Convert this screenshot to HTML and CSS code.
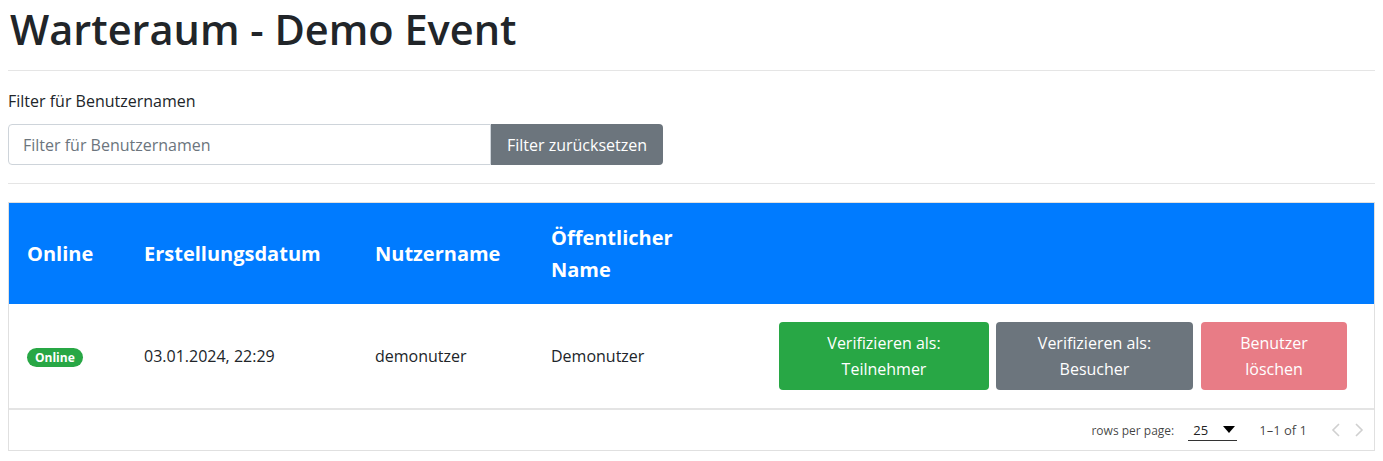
FILE: index.html
```html
<!DOCTYPE html>
<html lang="de">
<head>
<meta charset="utf-8">
<title>Warteraum - Demo Event</title>
<link rel="stylesheet" href="styles.css">
</head>
<body>
<h1 class="title">Warteraum - Demo Event</h1>
<hr class="sep sep-top">
<label class="filter-label" for="filter">Filter für Benutzernamen</label>
<div class="input-group">
  <input id="filter" class="filter-input" type="text" placeholder="Filter für Benutzernamen">
  <button class="btn btn-reset">Filter zurücksetzen</button>
</div>
<hr class="sep sep-mid">
<div class="table-card">
  <table class="data-table">
    <colgroup>
      <col class="c1"><col class="c2"><col class="c3"><col class="c4"><col class="c5">
    </colgroup>
    <thead>
      <tr>
        <th>Online</th>
        <th>Erstellungsdatum</th>
        <th>Nutzername</th>
        <th><div class="wrap">Öffentlicher Name</div></th>
        <th></th>
      </tr>
    </thead>
    <tbody>
      <tr>
        <td><span class="badge">Online</span></td>
        <td>03.01.2024, 22:29</td>
        <td>demonutzer</td>
        <td>Demonutzer</td>
        <td>
          <div class="actions">
            <button class="btn act btn-green">Verifizieren als:<br>Teilnehmer</button>
            <button class="btn act btn-grey">Verifizieren als:<br>Besucher</button>
            <button class="btn act btn-red" disabled>Benutzer<br>löschen</button>
          </div>
        </td>
      </tr>
    </tbody>
  </table>
  <div class="table-footer">
    <span class="rpp">rows per page:</span>
    <div class="select"><span>25</span><svg class="caret" width="12" height="7" viewBox="0 0 12 7"><path d="M0 0h12L6 7z" fill="#000"/></svg></div>
    <span class="range">1–1 of 1</span>
    <div class="pager">
      <svg width="10" height="14" viewBox="0 0 10 14"><path d="M8 1L2 7l6 6" fill="none" stroke="#d0d0d0" stroke-width="1.6"/></svg>
      <svg width="10" height="14" viewBox="0 0 10 14"><path d="M2 1l6 6-6 6" fill="none" stroke="#d0d0d0" stroke-width="1.6"/></svg>
    </div>
  </div>
</div>
</body>
</html>
```
FILE: styles.css
```css
* { box-sizing: border-box; }
body {
  margin: 0;
  padding: 0 8px;
  font-family: "Open Sans", "Noto Sans", sans-serif;
  font-size: 16px;
  color: #212529;
  background: #fff;
}
.title {
  margin: 0;
  padding-left: 2px;
  font-size: 41.5px;
  font-weight: 600;
  line-height: 58px;
  color: #212529;
}
.sep {
  border: 0;
  border-top: 1px solid #e5e5e5;
  margin: 0;
}
.sep-top { margin-top: 12px; }
.filter-label {
  display: block;
  margin-top: 18px;
  line-height: 24px;
  font-size: 16px;
}
.input-group {
  display: flex;
  margin-top: 11px;
  width: 655px;
  height: 41px;
}
.filter-input {
  flex: 1;
  border: 1px solid #ced4da;
  border-radius: 4px 0 0 4px;
  padding: 0 14px;
  font: inherit;
  font-size: 16px;
  color: #495057;
}
.filter-input::placeholder { color: #6c757d; }
.btn {
  font: inherit;
  border: 1px solid transparent;
  color: #fff;
  cursor: pointer;
}
.btn-reset {
  width: 172px;
  background: #6c757d;
  border-radius: 0 4px 4px 0;
  font-size: 16px;
}
.sep-mid { margin-top: 18px; }
.table-card {
  margin-top: 18px;
  border: 1px solid #e0e0e0;
  width: 1367px;
}
.data-table {
  width: 100%;
  border-collapse: collapse;
  table-layout: fixed;
}
.c1 { width: 117px; }
.c2 { width: 231px; }
.c3 { width: 176px; }
.c4 { width: 228px; }
.data-table th {
  background: #007bff;
  color: #fff;
  text-align: left;
  font-size: 20px;
  font-weight: 700;
  line-height: 32px;
  padding: 18px 18px;
  height: 101px;
}
.wrap { width: min-content; }
.data-table td {
  padding: 18px 18px;
  height: 104px;
  border-bottom: 2px solid #e4e4e4;
  font-size: 16px;
  vertical-align: middle;
}
.badge {
  display: inline-block;
  background: #28a745;
  color: #fff;
  font-size: 12px;
  font-weight: 700;
  line-height: 19px;
  padding: 0 8px;
  border-radius: 10px;
}
.actions {
  display: flex;
  gap: 7px;
}
.act {
  font-size: 16px;
  line-height: 26px;
  padding: 7px 8px;
  border-radius: 4px;
}
.btn-green { width: 210px; background: #28a745; }
.btn-grey { width: 197px; background: #6c757d; margin-right: 1px; }
.btn-red { width: 146px; background: #e87c86; cursor: default; }
.table-footer {
  height: 40px;
  display: flex;
  align-items: center;
  justify-content: flex-end;
  font-size: 12px;
  color: rgba(0, 0, 0, 0.75);
  padding-right: 10px;
}
.rpp { margin-right: 14px; }
.select {
  display: flex;
  align-items: center;
  justify-content: space-between;
  width: 49px;
  height: 22px;
  padding: 0 2px 0 5px;
  border-bottom: 1px solid #333;
  margin-right: 22px;
  font-size: 13px;
  color: #222;
}
.range { margin-right: 24px; font-size: 13px; }
.pager { display: flex; gap: 13px; }
```
